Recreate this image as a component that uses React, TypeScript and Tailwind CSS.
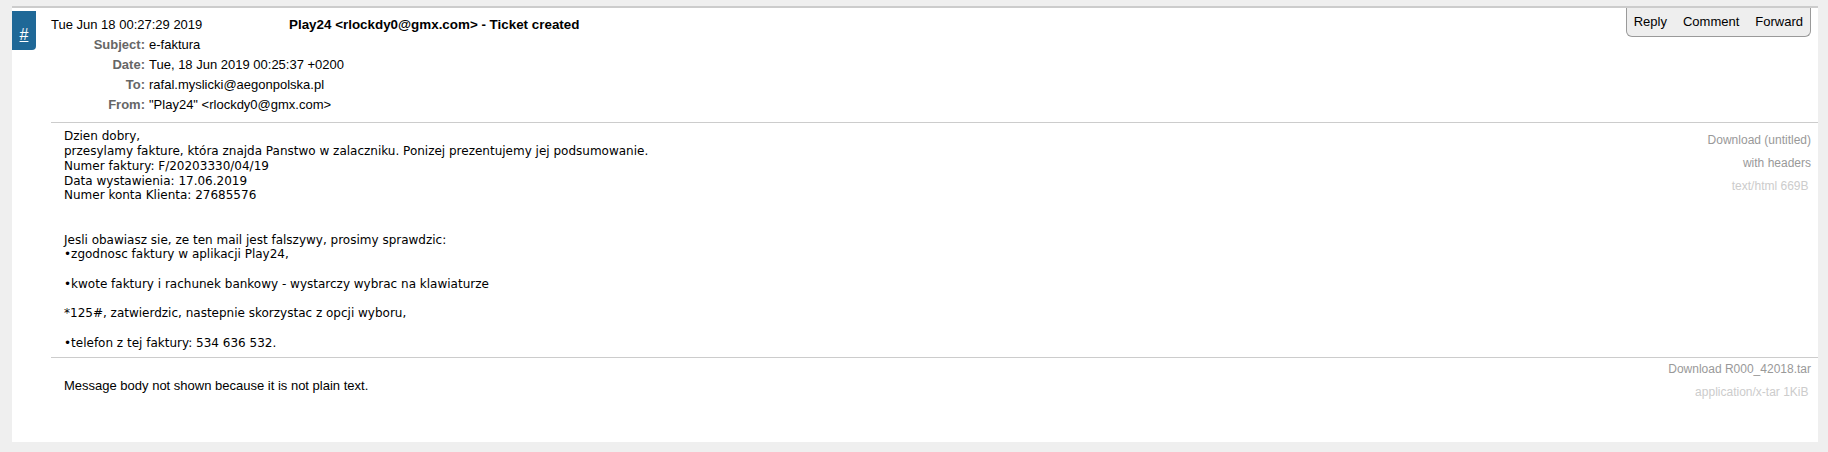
import React from 'react'

const bodyText = [
  'Dzien dobry,',
  'przesylamy fakture, która znajda Panstwo w zalaczniku. Ponizej prezentujemy jej podsumowanie.',
  'Numer faktury: F/20203330/04/19',
  'Data wystawienia: 17.06.2019',
  'Numer konta Klienta: 27685576',
  '',
  '',
  'Jesli obawiasz sie, ze ten mail jest falszywy, prosimy sprawdzic:',
  '•zgodnosc faktury w aplikacji Play24,',
  '',
  '•kwote faktury i rachunek bankowy - wystarczy wybrac na klawiaturze',
  '',
  '*125#, zatwierdzic, nastepnie skorzystac z opcji wyboru,',
  '',
  '•telefon z tej faktury: 534 636 532.',
].join('\n')

const headers = [
  { label: 'Subject:', value: 'e-faktura' },
  { label: 'Date:', value: 'Tue, 18 Jun 2019 00:25:37 +0200' },
  { label: 'To:', value: 'rafal.myslicki@aegonpolska.pl' },
  { label: 'From:', value: '"Play24" <rlockdy0@gmx.com>' },
]

export default function App() {
  return (
    <div className="min-h-screen bg-[#efefef] pt-[6px] pl-[12px] pr-[10px] pb-[10px] font-['Liberation_Sans',Arial,sans-serif] text-[13px] text-black">
      <div className="relative flex h-[436px] border-t-2 border-[#cccccc] bg-white">
        {/* ticket badge */}
        <div className="w-[24px] shrink-0">
          <a
            href="#"
            className="mt-[3px] block h-[39px] rounded-br-[4px] bg-[#1f6897] pt-[16px] text-center text-[16px] leading-[16px] text-white underline"
          >
            #
          </a>
        </div>

        {/* actions */}
        <div className="absolute top-0 right-[7px] flex h-[29px] items-center gap-[16px] rounded-b-[6px] border-x border-b border-[#9a9a9a] bg-[#eeeeee] pr-[7px] pl-[7px]">
          <span>Reply</span>
          <span>Comment</span>
          <span>Forward</span>
        </div>

        <div className="ml-[15px] min-w-0 flex-1">
          {/* transaction header */}
          <div className="flex pt-[6.5px] leading-[20px]">
            <span className="w-[238px] shrink-0">Tue Jun 18 00:27:29 2019</span>
            <span className="text-[13.4px] font-bold">Play24 &lt;rlockdy0@gmx.com&gt; - Ticket created</span>
          </div>
          <div className="grid grid-cols-[94px_auto] gap-x-[4px] leading-[20px]">
            {headers.map((h) => (
              <React.Fragment key={h.label}>
                <span className="text-right font-bold text-[#666666]">{h.label}</span>
                <span>{h.value}</span>
              </React.Fragment>
            ))}
          </div>

          {/* message part 1 */}
          <div className="mt-[7.5px] flex border-t border-[#cccccc]">
            <div className="flex-1 whitespace-pre-line pt-[6.3px] pb-[6.6px] pl-[13px] font-['DejaVu_Sans',Verdana,sans-serif] text-[12px] leading-[14.76px]">
              {bodyText}
            </div>
            <div className="pt-[5.5px] pr-[7px] text-right text-[12px] leading-[23px]">
              <div className="text-[#999999]">Download (untitled)</div>
              <div className="text-[#999999]">with headers</div>
              <div className="pr-[2.5px] text-[#cccccc]">text/html 669B</div>
            </div>
          </div>

          {/* message part 2 */}
          <div className="flex border-t border-[#cccccc]">
            <div className="flex-1 pt-[20px] pl-[13px] leading-[15px]">
              Message body not shown because it is not plain text.
            </div>
            <div className="pr-[7px] text-right text-[12px] leading-[23px]">
              <div className="text-[#999999]">Download R000_42018.tar</div>
              <div className="pr-[2.5px] text-[#cccccc]">application/x-tar 1KiB</div>
            </div>
          </div>
        </div>
      </div>
    </div>
  )
}
